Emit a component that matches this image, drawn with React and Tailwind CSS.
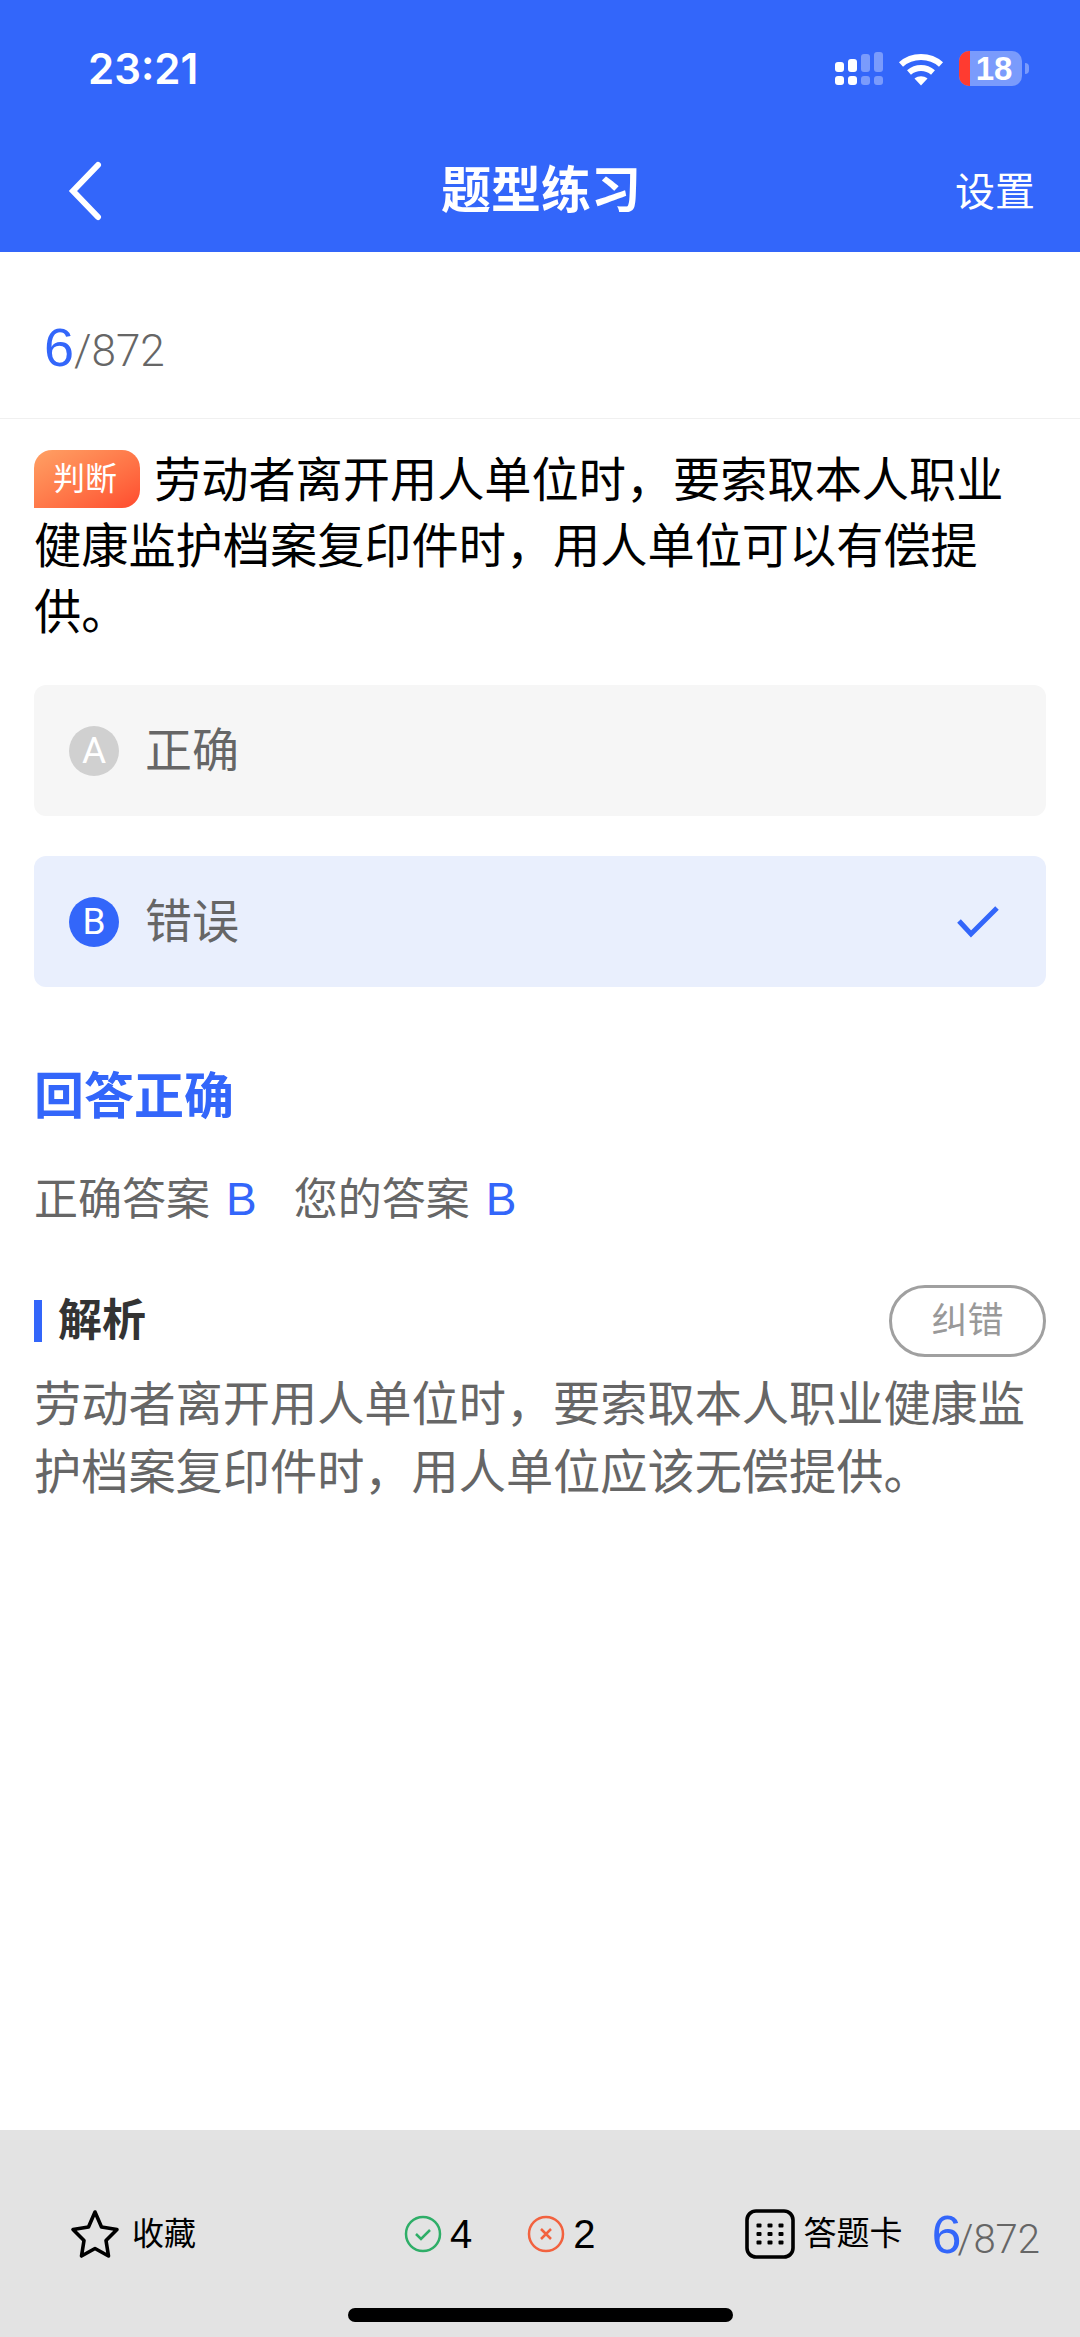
const sans = "font-['Liberation_Sans','Noto_Sans_CJK_SC',sans-serif]";

function SignalIcon() {
  return (
    <svg width="48" height="36" viewBox="0 0 48 36" className="block">
      <g fill="#fff">
        <rect x="0" y="11" width="9" height="10" rx="3" />
        <rect x="13" y="8" width="9" height="13" rx="3" />
        <rect x="0" y="25" width="9" height="9" rx="3" />
        <rect x="13" y="25" width="9" height="9" rx="3" />
      </g>
      <g fill="#fff" fillOpacity="0.35">
        <rect x="26" y="3" width="9" height="18" rx="3" />
        <rect x="39" y="1" width="9" height="20" rx="3" />
        <rect x="26" y="25" width="9" height="9" rx="3" />
        <rect x="39" y="25" width="9" height="9" rx="3" />
      </g>
    </svg>
  );
}

function WifiIcon() {
  return (
    <svg width="46" height="36" viewBox="0 0 46 36" className="block">
      <g fill="none" stroke="#fff" strokeWidth="6">
        <path d="M3 13.5C14 3.5 32 3.5 43 13.5" />
        <path d="M11 21.5C18 15.5 28 15.5 35 21.5" />
      </g>
      <path d="M16.5 27.5C20.5 24.5 25.5 24.5 29.5 27.5L23 34.5Z" fill="#fff" />
    </svg>
  );
}

function Battery() {
  return (
    <div className="flex items-center gap-[3px]">
      <div className="relative flex h-[35px] w-[63px] items-center justify-center overflow-hidden rounded-[10px] bg-white/35">
        <div className="absolute inset-y-0 left-0 w-[11px] bg-[#ff3b30]" />
        <span className={`relative pl-[7px] text-[33px] leading-none font-bold text-white ${sans}`}>18</span>
      </div>
      <div className="h-[11px] w-[4px] rounded-r-full bg-white/35" />
    </div>
  );
}

function Option({ letter, label, active }) {
  return (
    <div className={`flex h-[131px] items-center rounded-[12px] pr-[46px] pl-[35px] ${active ? "bg-[#e9effd]" : "bg-[#f6f6f6]"}`}>
      <div className={`flex h-[50px] w-[50px] items-center justify-center rounded-full font-['Roboto',sans-serif] text-[37px] font-normal text-white ${active ? "bg-[#3366fa]" : "bg-[#d0d0d0]"}`}>
        {letter}
      </div>
      <span className="ml-[26px] text-[47px] leading-none text-[#666]">{label}</span>
      {active && (
        <svg width="44" height="34" viewBox="0 0 44 34" className="ml-auto">
          <path d="M3 16L15 29L41 3" fill="none" stroke="#3366fa" strokeWidth="5" />
        </svg>
      )}
    </div>
  );
}

function StarIcon() {
  return (
    <svg width="50" height="50" viewBox="0 0 50 50">
      <path
        d="M25 3L31.5 18L47 20.5L36 31.5L38.5 47L25 39.5L11.5 47L14 31.5L3 20.5L18.5 18Z"
        fill="none"
        stroke="#000"
        strokeWidth="3.6"
        strokeLinejoin="round"
      />
    </svg>
  );
}

function GridIcon() {
  const dots = [];
  for (const y of [16.5, 25, 33.5]) {
    for (const x of [14, 25, 36]) {
      dots.push(<rect key={`${x}-${y}`} x={x - 2.5} y={y - 2} width="5" height="4" rx="1" fill="#000" />);
    }
  }
  return (
    <svg width="50" height="50" viewBox="0 0 50 50">
      <rect x="2" y="2" width="46" height="46" rx="9" fill="none" stroke="#000" strokeWidth="3.6" />
      {dots}
    </svg>
  );
}

function Counter({ num, slash }) {
  return (
    <span className="flex items-baseline leading-none">
      <span className={`text-[54px] text-[#3366fa] ${num}`}>6</span>
      <span className={`font-['Roboto',sans-serif] font-light text-[#666] ${slash}`}>/872</span>
    </span>
  );
}

export default function App() {
  return (
    <div className={`flex h-[2337px] w-[1080px] flex-col overflow-hidden bg-white ${sans}`}>
      <header className="h-[252px] shrink-0 bg-[#3366fa] text-white">
        <div className="flex h-[137px] items-center justify-between pr-[51px] pl-[88px]">
          <span className="font-['Inter',sans-serif] text-[42px] leading-none font-semibold">23:21</span>
          <div className="flex items-center gap-[15px]">
            <SignalIcon />
            <WifiIcon />
            <Battery />
          </div>
        </div>
        <div className="flex h-[108px] items-center px-[47px]">
          <div className="flex-1">
            <svg width="50" height="60" viewBox="0 0 50 60" className="ml-[21px] block">
              <path d="M30 4L5 30L30 56" fill="none" stroke="#fff" strokeWidth="6" strokeLinecap="round" />
            </svg>
          </div>
          <h1 className="text-[50px] leading-none font-semibold">题型练习</h1>
          <div className="-mr-[2px] flex-1 pt-[2px] text-right text-[40px] leading-none">设置</div>
        </div>
      </header>

      <div className="flex h-[167px] shrink-0 items-center border-b border-[#f0f0f0] pt-[24px] pl-[44px]">
        <Counter num="" slash="text-[44px]" />
      </div>

      <main className="flex flex-1 flex-col px-[34px]">
        <p className="mt-[29px] text-[47.2px] leading-[66px] text-black">
          <span className="relative -top-[6px] mr-[14px] inline-flex h-[58px] w-[106px] items-center justify-center rounded-[18px] rounded-bl-none bg-gradient-to-br from-[#ffa064] to-[#ff4a2e] pr-[4px] align-middle text-[32px] leading-none text-white">
            判断
          </span>
          劳动者离开用人单位时，要索取本人职业健康监护档案复印件时，用人单位可以有偿提供。
        </p>

        <div className="mt-[39px] flex flex-col gap-[40px]">
          <Option letter="A" label="正确" />
          <Option letter="B" label="错误" active />
        </div>

        <h2 className="mt-[80px] text-[50px] leading-[60px] font-bold text-[#3366fa]">回答正确</h2>

        <div className="mt-[47px] flex items-baseline text-[44px] leading-[50px] text-[#666]">
          <span>正确答案</span>
          <span className="ml-[16px] text-[46px] text-[#3366fa]">B</span>
          <span className="ml-[37px]">您的答案</span>
          <span className="ml-[16px] text-[46px] text-[#3366fa]">B</span>
        </div>

        <div className="mt-[60px] flex items-center justify-between">
          <div className="flex items-center">
            <div className="h-[42px] w-[8px] bg-[#3366fa]" />
            <span className="ml-[16px] text-[44px] leading-none font-bold text-[#333]">解析</span>
          </div>
          <button className="flex h-[72px] w-[157px] items-center justify-center rounded-[36px] border-[3px] border-[#a0a0a0] text-[36px] leading-none text-[#999]">
            纠错
          </button>
        </div>

        <p className="mt-[14px] text-[47.2px] leading-[68px] text-[#666]">
          劳动者离开用人单位时，要索取本人职业健康监护档案复印件时，用人单位应该无偿提供。
        </p>
      </main>

      <footer className="relative h-[207px] shrink-0 bg-[#e3e3e3]">
        <div className="flex h-[207px] items-center pr-[40px] pl-[70px] text-black">
          <StarIcon />
          <span className="ml-[12px] text-[32px] leading-none">收藏</span>

          <svg width="38" height="38" viewBox="0 0 38 38" className="ml-[208px]">
            <circle cx="19" cy="19" r="17" fill="none" stroke="#2fae68" strokeWidth="2.5" />
            <path d="M12 19L17 24L26 15" fill="none" stroke="#2fae68" strokeWidth="2.5" />
          </svg>
          <span className="ml-[8px] text-[40px] leading-none">4</span>

          <svg width="38" height="38" viewBox="0 0 38 38" className="ml-[55px]">
            <circle cx="19" cy="19" r="17" fill="none" stroke="#f2623f" strokeWidth="2.5" />
            <path d="M14 14L24 24M24 14L14 24" fill="none" stroke="#f2623f" strokeWidth="2.5" />
          </svg>
          <span className="ml-[8px] text-[40px] leading-none">2</span>

          <div className="ml-[149px]">
            <GridIcon />
          </div>
          <span className="ml-[9px] text-[33px] leading-none">答题卡</span>
          <div className="ml-auto">
            <Counter num="tracking-[-4px]" slash="text-[40px]" />
          </div>
        </div>
        <div className="absolute bottom-[15px] left-[348px] h-[14px] w-[385px] rounded-full bg-black" />
      </footer>
    </div>
  );
}
